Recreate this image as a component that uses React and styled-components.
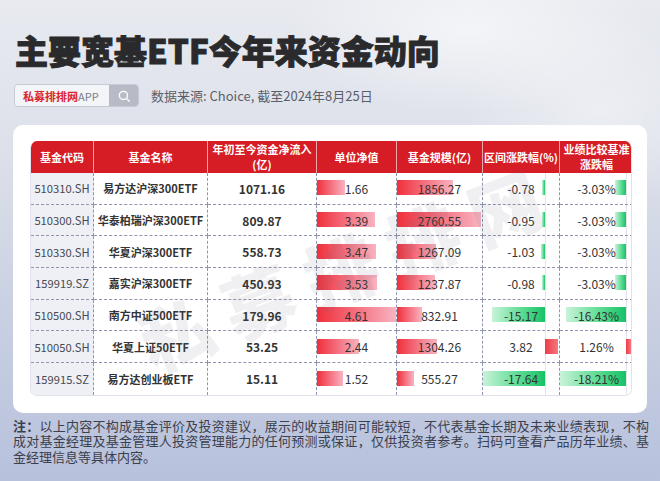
import React from 'react'
import styled, { createGlobalStyle } from 'styled-components'

const FONT = '"Noto Sans CJK SC", "Noto Sans", sans-serif'

const GlobalStyle = createGlobalStyle`
  html, body {
    margin: 0;
    padding: 0;
  }
  body {
    font-family: ${FONT};
    background: #cfd5e4;
  }
`

const Page = styled.div`
  position: relative;
  width: 660px;
  height: 481px;
  overflow: hidden;
  box-sizing: border-box;
  padding: 27px 13px 0 13px;
  background:
    radial-gradient(ellipse 260px 120px at 470px 30px, rgba(255, 255, 255, 0.55), rgba(255, 255, 255, 0) 70%),
    radial-gradient(ellipse 200px 140px at 600px 110px, rgba(255, 255, 255, 0.4), rgba(255, 255, 255, 0) 70%),
    linear-gradient(180deg, #e8eaf0 0%, #dde1ea 30%, #c9d0e2 65%, #b7c1dc 100%);
`

const Title = styled.h1`
  margin: 0 0 0 2px;
  font-size: 33px;
  line-height: 46px;
  font-weight: 900;
  color: #2a2a2c;
  -webkit-text-stroke: 0.9px #2a2a2c;
`

const SourceRow = styled.div`
  display: flex;
  align-items: center;
  gap: 12px;
  margin-top: 11px;
  margin-left: 1px;
  height: 23px;
`

const SearchBox = styled.div`
  display: flex;
  height: 23px;
  width: 125px;
  border-radius: 4px;
  overflow: hidden;
  border: 1px solid #c7cad3;
  box-sizing: border-box;
`

const SearchText = styled.div`
  flex: 1;
  display: flex;
  align-items: center;
  padding-left: 8px;
  background: #f4f5f8;
  font-size: 11px;
  color: #7a7d86;
`

const Brand = styled.span`
  color: #d9262e;
  font-weight: 700;
`

const SearchBtn = styled.div`
  width: 29px;
  display: flex;
  align-items: center;
  justify-content: center;
  background: #b7bbc5;
`

const Source = styled.div`
  font-size: 13px;
  color: #5b5f69;
`

const Card = styled.div`
  position: relative;
  margin-top: 18px;
  width: 634px;
  box-sizing: border-box;
  padding: 16px 15px 17px 17px;
  background: #ffffff;
  border-radius: 10px;
  overflow: hidden;
`

const Table = styled.div`
  display: grid;
  grid-template-columns: 63px 114px 109px 80px 86px 77px 73px;
  grid-template-rows: 32px repeat(7, 31.7px);
  border: 1px solid #dfe2ea;
  border-top: none;
  border-radius: 7px;
  overflow: hidden;
`

const Head = styled.div`
  display: flex;
  align-items: center;
  justify-content: center;
  text-align: center;
  background: #d61c24;
  color: #ffffff;
  font-size: 11px;
  font-weight: 700;
  line-height: 15px;
  box-sizing: border-box;
  border-right: ${p => (p.$last ? 'none' : '1px solid #eea5a9')};
`

const Cell = styled.div`
  position: relative;
  display: flex;
  align-items: center;
  justify-content: center;
  box-sizing: border-box;
  font-size: ${p => p.$size || 12}px;
  color: ${p => (p.$shade ? '#474a52' : '#333333')};
  font-weight: ${p => (p.$bold ? 700 : 400)};
  background: ${p => (p.$shade ? '#eef0f6' : '#ffffff')};
  border-right: ${p => (p.$lastCol ? 'none' : '1px dashed #8f95ae')};
  border-bottom: ${p => (p.$lastRow ? 'none' : '1px dashed #8f95ae')};
  white-space: nowrap;
`

const Value = styled.span`
  position: relative;
  z-index: 1;
`

const Bar = styled.div`
  position: absolute;
  top: 50%;
  height: 15px;
  margin-top: -8px;
  background: ${p =>
    p.$tone === 'green'
      ? 'linear-gradient(90deg, #c9f3d9 0%, #5fdc95 55%, #17c266 100%)'
      : p.$tone === 'up'
      ? 'linear-gradient(90deg, #ef3b45 0%, #f47781 100%)'
      : 'linear-gradient(90deg, #ef303b 0%, #f46a79 45%, #f8b3c1 100%)'};
`

const Axis = styled.div`
  position: absolute;
  top: 0;
  bottom: 0;
  width: 1px;
  background: #e1e4ec;
`

const Watermark = styled.div`
  position: absolute;
  left: 334px;
  top: 140px;
  transform: translate(-50%, -50%) rotate(-21deg);
  font-size: 72px;
  font-weight: 900;
  letter-spacing: 16px;
  color: rgba(110, 112, 125, 0.1);
  white-space: nowrap;
  pointer-events: none;
  z-index: 3;
`

const Note = styled.div`
  margin-top: 6px;
  width: 636px;
  font-family: "Liberation Sans", "Noto Sans CJK SC", sans-serif;
  font-size: 13px;
  line-height: 15.5px;
  color: #3c404c;
`

const NoteLine = styled.div`
  text-align: ${p => (p.$justify ? 'justify' : 'left')};
  text-align-last: ${p => (p.$justify ? 'justify' : 'left')};
`

const rows = [
  ['510310.SH', '易方达沪深300ETF', '1071.16', '1.66', '1856.27', '-0.78', '-3.03%'],
  ['510300.SH', '华泰柏瑞沪深300ETF', '809.87', '3.39', '2760.55', '-0.95', '-3.03%'],
  ['510330.SH', '华夏沪深300ETF', '558.73', '3.47', '1267.09', '-1.03', '-3.03%'],
  ['159919.SZ', '嘉实沪深300ETF', '450.93', '3.53', '1237.87', '-0.98', '-3.03%'],
  ['510500.SH', '南方中证500ETF', '179.96', '4.61', '832.91', '-15.17', '-16.43%'],
  ['510050.SH', '华夏上证50ETF', '53.25', '2.44', '1304.26', '3.82', '1.26%'],
  ['159915.SZ', '易方达创业板ETF', '15.11', '1.52', '555.27', '-17.64', '-18.21%'],
]

const heads = ['基金代码', '基金名称', ['年初至今资金净流入', '(亿)'], '单位净值', '基金规模(亿)', '区间涨跌幅(%)', ['业绩比较基准', '涨跌幅']]

// px per unit for the data bars
const NAV_SCALE = 79 / 4.61
const SIZE_SCALE = 84 / 2760.55
const CHG_AXIS = 62
const CHG_SCALE = 62 / 17.64
const BM_AXIS = 66
const BM_SCALE = 66 / 18.21

function PlainBar({ value, scale, last }) {
  return (
    <Cell $lastRow={last}>
      <Bar style={{ left: 0, width: parseFloat(value) * scale }} />
      <Value>{value}</Value>
    </Cell>
  )
}

function SignedBar({ value, axis, scale, last, lastCol }) {
  const v = parseFloat(value)
  const w = Math.abs(v) * scale
  return (
    <Cell $lastRow={last} $lastCol={lastCol}>
      <Axis style={{ left: axis }} />
      {v < 0
        ? <Bar $tone="green" style={{ left: axis - w, width: w }} />
        : <Bar $tone="up" style={{ left: axis, width: w }} />}
      <Value>{value}</Value>
    </Cell>
  )
}

function SearchIcon() {
  return (
    <svg width="14" height="14" viewBox="0 0 24 24" fill="none" stroke="#ffffff" strokeWidth="2.4" strokeLinecap="round">
      <circle cx="11" cy="11" r="7" />
      <path d="M16.5 16.5 L21 21" />
    </svg>
  )
}

export default function App() {
  return (
    <Page>
      <GlobalStyle />
      <Title>主要宽基ETF今年来资金动向</Title>
      <SourceRow>
        <SearchBox>
          <SearchText><Brand>私募排排网</Brand>APP</SearchText>
          <SearchBtn><SearchIcon /></SearchBtn>
        </SearchBox>
        <Source>数据来源: Choice, 截至2024年8月25日</Source>
      </SourceRow>

      <Card>
        <Table>
          {heads.map((h, i) => (
            <Head key={i} $last={i === heads.length - 1}>
              {Array.isArray(h) ? <span>{h[0]}<br />{h[1]}</span> : h}
            </Head>
          ))}
          {rows.map((r, i) => {
            const last = i === rows.length - 1
            return (
              <React.Fragment key={r[0]}>
                <Cell $shade $size={11.2} $lastRow={last}>{r[0]}</Cell>
                <Cell $bold $size={11} $lastRow={last}>{r[1]}</Cell>
                <Cell $bold $lastRow={last}>{r[2]}</Cell>
                <PlainBar value={r[3]} scale={NAV_SCALE} last={last} />
                <PlainBar value={r[4]} scale={SIZE_SCALE} last={last} />
                <SignedBar value={r[5]} axis={CHG_AXIS} scale={CHG_SCALE} last={last} />
                <SignedBar value={r[6]} axis={BM_AXIS} scale={BM_SCALE} last={last} lastCol />
              </React.Fragment>
            )
          })}
        </Table>
        <Watermark>私募排排网</Watermark>
      </Card>

      <Note>
        <NoteLine $justify><b>注：</b>以上内容不构成基金评价及投资建议，展示的收益期间可能较短，不代表基金长期及未来业绩表现，不构</NoteLine>
        <NoteLine $justify>成对基金经理及基金管理人投资管理能力的任何预测或保证，仅供投资者参考。扫码可查看产品历年业绩、基</NoteLine>
        <NoteLine>金经理信息等具体内容。</NoteLine>
      </Note>
    </Page>
  )
}
